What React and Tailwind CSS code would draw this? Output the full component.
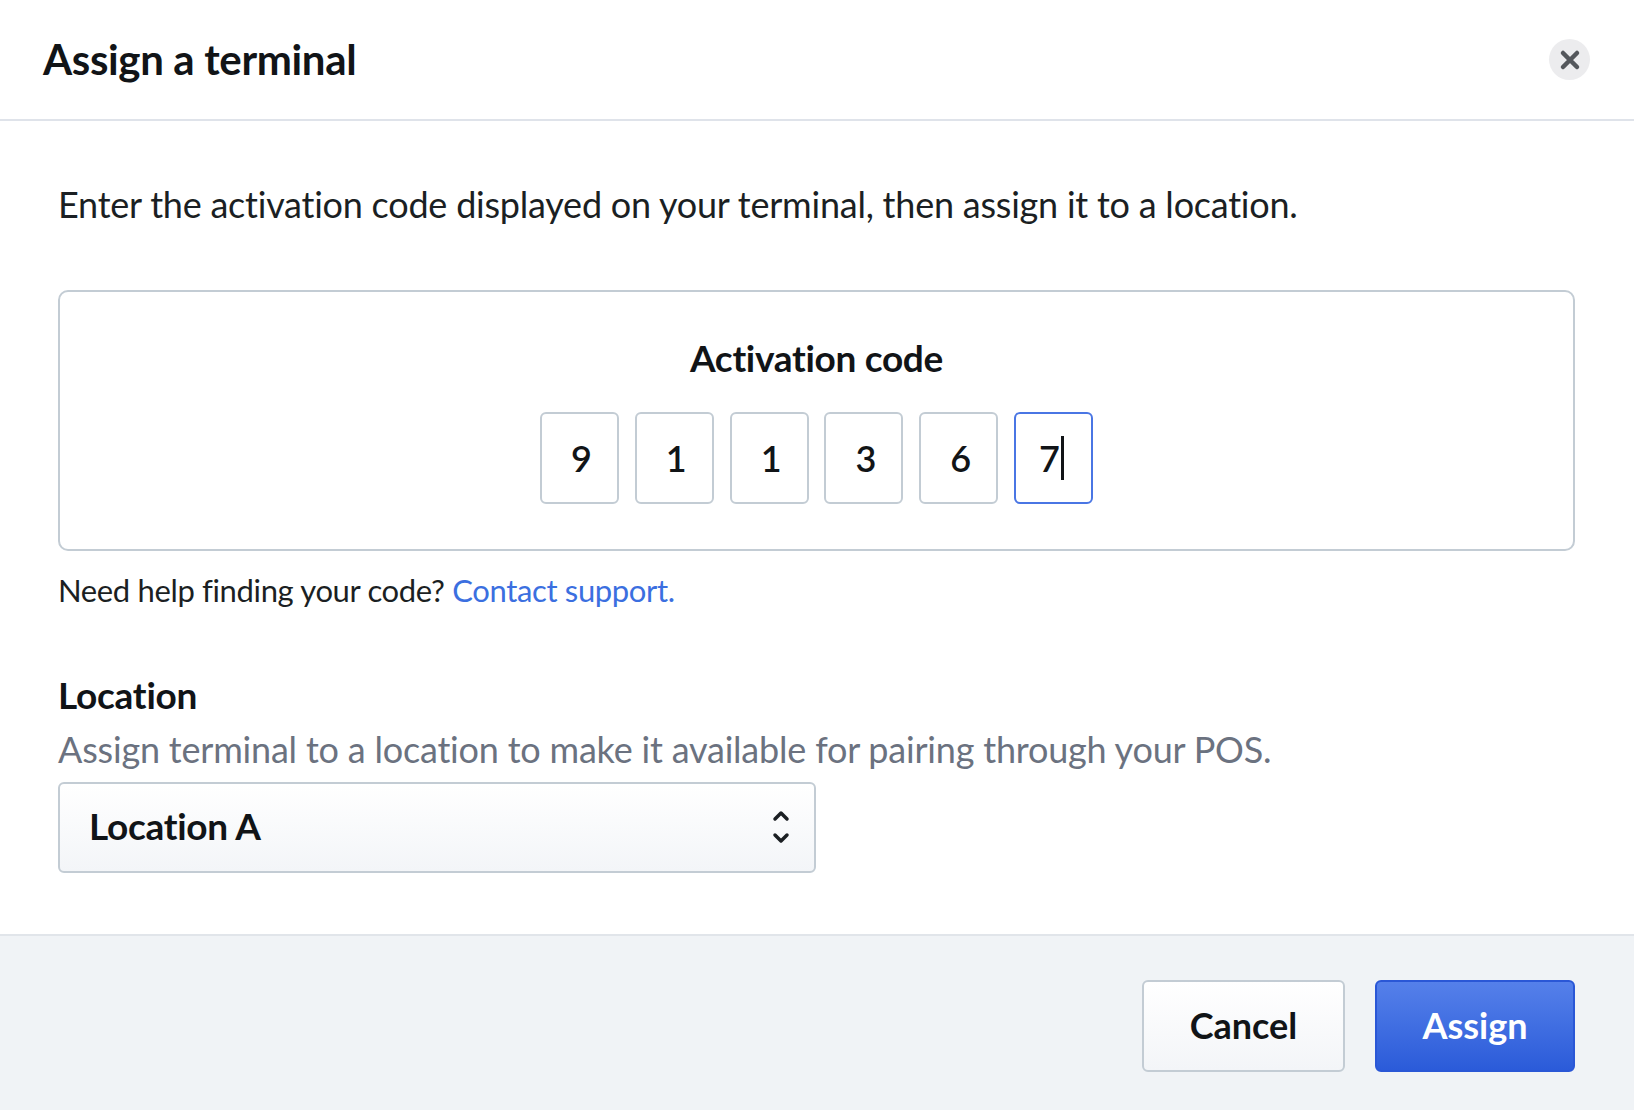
const digits = ["9", "1", "1", "3", "6"];

function DigitBox({ children, active }) {
  return (
    <div
      className={`relative flex h-[92px] w-[79px] items-center justify-center rounded-[6px] border-2 bg-white text-[36px] font-semibold text-[#111417] ${
        active ? "border-[#4a76e4] pr-[4px]" : "border-[#c3ccd4] pl-[4px]"
      }`}
    >
      {children}
    </div>
  );
}

export default function App() {
  return (
    <div className="flex h-[1110px] w-full flex-col bg-white font-['Lato',sans-serif] text-[#1b1f23]">
      <div className="flex h-[121px] shrink-0 items-center justify-between border-b-2 border-[#dfe3ea] pl-[43px] pr-[44px]">
        <h1 className="text-[42px] font-bold tracking-[-0.35px] text-[#111417]">Assign a terminal</h1>
        <button className="flex h-[41px] w-[41px] items-center justify-center rounded-full bg-[#ececee]">
          <svg width="22" height="22" viewBox="0 0 22 22" fill="none">
            <path d="M4 4 18 18M18 4 4 18" stroke="#54575c" strokeWidth="4.5" strokeLinecap="round" />
          </svg>
        </button>
      </div>

      <div className="flex-1 px-[58px] pt-[60px]">
        <p className="text-[36px] leading-[46px] tracking-[-0.23px]">
          Enter the activation code displayed on your terminal, then assign it to a location.
        </p>

        <div className="mt-[63px] flex h-[261px] w-[1517px] flex-col items-center rounded-[10px] border-2 border-[#c3ccd4] pt-[43px]">
          <div className="text-[37px] font-bold leading-[46px] tracking-[-0.3px] text-[#111417]">Activation code</div>
          <div className="mt-[31px] flex gap-[15.8px]">
            {digits.map((d, i) => (
              <DigitBox key={i}>{d}</DigitBox>
            ))}
            <DigitBox active>
              7<span className="ml-[1px] h-[44px] w-[3px] bg-[#111417]" />
            </DigitBox>
          </div>
        </div>

        <p className="mt-[17px] text-[31px] leading-[44px] tracking-[-0.35px]">
          Need help finding your code? <a className="text-[#3b6fe0]">Contact support.</a>
        </p>

        <div className="mt-[60px] text-[37px] font-bold leading-[46px] tracking-[-0.25px] text-[#111417]">Location</div>
        <p className="mt-[8px] text-[36px] leading-[46px] tracking-[-0.2px] text-[#6b7280]">
          Assign terminal to a location to make it available for pairing through your POS.
        </p>
        <div className="mt-[10px] flex h-[91px] w-[758px] items-center justify-between rounded-[6px] border-2 border-[#c3ccd4] bg-gradient-to-b from-white to-[#f3f5f8] pb-[2px] pl-[29px] pr-[24px]">
          <span className="mb-[2px] text-[37px] font-bold tracking-[-0.3px] text-[#111417]">Location A</span>
          <svg width="18" height="34" viewBox="0 0 18 34" fill="none">
            <path d="M3 9 9 3l6 6M3 25l6 6 6-6" stroke="#1b1f23" strokeWidth="3.5" strokeLinecap="round" strokeLinejoin="round" />
          </svg>
        </div>
      </div>

      <div className="flex h-[176px] shrink-0 items-center justify-end gap-[30px] border-t-2 border-[#e1e5ea] bg-[#f0f3f6] pr-[59px] pt-[6px]">
        <button className="h-[92px] w-[203px] rounded-[6px] border-2 border-[#c3ccd4] bg-gradient-to-b from-white to-[#f3f5f8] pb-[2px] text-[36px] font-bold text-[#111417]">
          Cancel
        </button>
        <button className="h-[92px] w-[200px] rounded-[6px] border-2 border-[#2a57d6] bg-gradient-to-b from-[#5580ea] to-[#2b5bd9] pb-[2px] text-[36px] font-bold text-white">
          Assign
        </button>
      </div>
    </div>
  );
}
